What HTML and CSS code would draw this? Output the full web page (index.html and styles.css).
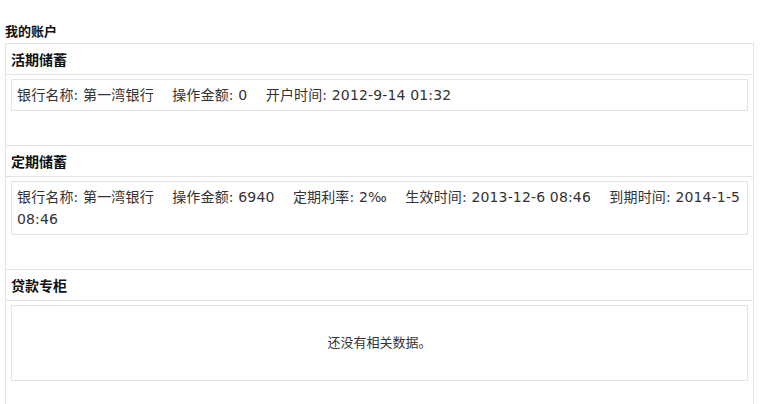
FILE: index.html
```html
<!DOCTYPE html>
<html lang="zh-CN">
<head>
<meta charset="utf-8">
<title>我的账户</title>
<link rel="stylesheet" href="styles.css">
</head>
<body>
<div class="page">
  <h2 class="page-title">我的账户</h2>
  <div class="account">
    <div class="panel">
      <div class="panel-hd">活期储蓄</div>
      <div class="panel-bd">
        <div class="item">银行名称: 第一湾银行&nbsp;&nbsp;&nbsp; 操作金额: 0&nbsp;&nbsp;&nbsp; 开户时间: 2012-9-14 01:32</div>
      </div>
    </div>
    <div class="panel">
      <div class="panel-hd">定期储蓄</div>
      <div class="panel-bd">
        <div class="item">银行名称: 第一湾银行&nbsp;&nbsp;&nbsp; 操作金额: 6940&nbsp;&nbsp;&nbsp; 定期利率: 2‰&nbsp;&nbsp;&nbsp; 生效时间: 2013-12-6 08:46&nbsp;&nbsp;&nbsp; 到期时间: 2014-1-5 08:46</div>
      </div>
    </div>
    <div class="panel">
      <div class="panel-hd">贷款专柜</div>
      <div class="panel-bd">
        <div class="item empty">还没有相关数据。</div>
      </div>
    </div>
  </div>
</div>
</body>
</html>
```

FILE: styles.css
```css
html, body {
  margin: 0;
  padding: 0;
  background: #ffffff;
}
body {
  font-family: "DejaVu Sans", "Noto Sans CJK SC", sans-serif;
  font-size: 14px;
  color: #333333;
}
.page {
  padding: 21px 20px 0 5px;
}
.page-title {
  margin: 0;
  height: 22px;
  line-height: 20px;
  font-size: 13px;
  font-weight: bold;
  color: #111111;
  font-family: "Noto Sans CJK SC", sans-serif;
}
.account {
  border: 1px solid #e4e4e4;
  border-bottom: none;
  min-height: 380px;
}
.panel + .panel {
  border-top: 1px solid #e4e4e4;
}
.panel-hd {
  height: 30px;
  line-height: 30px;
  padding-left: 5px;
  border-bottom: 1px solid #e4e4e4;
  font-family: "Noto Sans CJK SC", sans-serif;
  font-size: 14px;
  font-weight: bold;
  color: #111111;
}
.panel-bd {
  padding: 4px 5px 34px;
}
.item {
  border: 1px solid #e4e4e4;
  padding: 4px 5px;
  line-height: 22px;
  letter-spacing: 0.15px;
}
.item.empty {
  text-align: center;
  font-size: 13px;
  letter-spacing: 0;
  padding: 26px 5px;
}
```
